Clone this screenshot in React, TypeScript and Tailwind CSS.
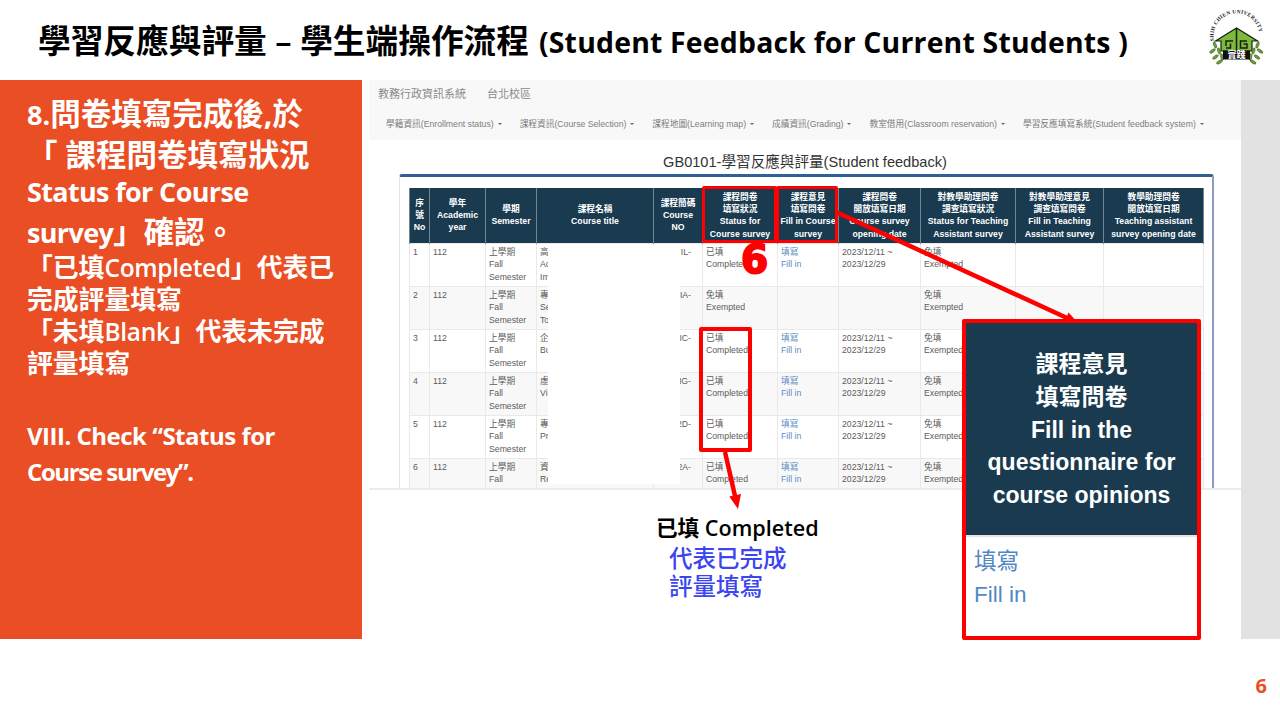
const slideFont = "font-['Open_Sans','Noto_Sans_CJK_TC',sans-serif]";
const shotFont = "font-['Liberation_Sans','Noto_Sans_CJK_TC',sans-serif]";

const navItems = [
  "學籍資訊(Enrollment status)",
  "課程資訊(Course Selection)",
  "課程地圖(Learning map)",
  "成績資訊(Grading)",
  "教室借用(Classroom reservation)",
  "學習反應填寫系統(Student feedback system)",
];

const columns = [20, 56, 51, 117, 49, 75, 61, 82, 95, 88, 100];

const headers = [
  ["序", "號", "No"],
  ["學年", "Academic", "year"],
  ["學期", "Semester"],
  ["課程名稱", "Course title"],
  ["課程簡碼", "Course", "NO"],
  ["課程問卷", "填寫狀況", "Status for", "Course survey"],
  ["課程意見", "填寫問卷", "Fill in Course", "survey"],
  ["課程問卷", "開放填寫日期", "Course survey", "opening date"],
  ["對教學助理問卷", "調查填寫狀況", "Status for Teaching", "Assistant survey"],
  ["對教學助理意見", "調查填寫問卷", "Fill in Teaching", "Assistant survey"],
  ["教學助理問卷", "開放填寫日期", "Teaching assistant", "survey opening date"],
];

const rows = [
  { no: 1, title: ["高", "Ac", "Im"], code: "IL-", done: true },
  { no: 2, title: ["專", "Se", "To"], code: "IA-", done: false },
  { no: 3, title: ["企", "Bu"], code: "IC-", done: true },
  { no: 4, title: ["虛", "Vi"], code: "IG-", done: true },
  { no: 5, title: ["專", "Pr"], code: "2D-", done: true },
  { no: 6, title: ["資", "Re"], code: "2A-", done: true },
];

const Lines = (p: { lines: string[] }) => (
  <>
    {p.lines.map((line) => (
      <div key={line}>{line}</div>
    ))}
  </>
);

const Td = (p: { children?: React.ReactNode; className?: string }) => (
  <td className={`border border-[#e9e9e9] pl-[3px] pt-[2px] align-top ${p.className ?? ""}`}>{p.children}</td>
);

const SurveyTable = () => (
  <table className="table-fixed border-collapse text-[8.7px] leading-[12.6px] text-[#5c5c5c]">
    <colgroup>
      {columns.map((w, i) => (
        <col key={i} style={{ width: w }} />
      ))}
    </colgroup>
    <thead>
      <tr className="h-[55px] bg-[#193a4f] font-bold text-white">
        {headers.map((h, i) => (
          <th key={i} className="border-x border-[#6f8694] text-center align-middle font-bold leading-[12.3px]">
            <Lines lines={h} />
          </th>
        ))}
      </tr>
    </thead>
    <tbody>
      {rows.map((r) => (
        <tr key={r.no} className={`h-[43px] ${r.no % 2 === 0 ? "bg-[#f8f8f8]" : "bg-white"}`}>
          <Td>{r.no}</Td>
          <Td>112</Td>
          <Td>
            <Lines lines={["上學期", "Fall", "Semester"]} />
          </Td>
          <Td>
            <Lines lines={r.title} />
          </Td>
          <Td className="pr-[11px] text-right">{r.code}</Td>
          <Td>
            <Lines lines={r.done ? ["已填", "Completed"] : ["免填", "Exempted"]} />
          </Td>
          <Td className="text-[#5b8ec4]">{r.done && <Lines lines={["填寫", "Fill in"]} />}</Td>
          <Td>{r.done && <Lines lines={["2023/12/11 ~", "2023/12/29"]} />}</Td>
          <Td>
            <Lines lines={["免填", "Exempted"]} />
          </Td>
          <Td />
          <Td />
        </tr>
      ))}
    </tbody>
  </table>
);

const BrowserShot = () => (
  <div className={`relative h-[410px] overflow-hidden border-b-2 border-[#ececec] bg-white ${shotFont}`}>
    <div className="h-[60px] bg-[#f8f8f8] text-[#8a8a8a]">
      <div className="flex h-[24px] items-end gap-[21px] pl-[9px] text-[11px] leading-[20px]">
        <span>教務行政資訊系統</span>
        <span>台北校區</span>
      </div>
      <div className="mt-[13px] flex gap-[18px] pl-[17px] text-[8.7px] leading-[14px] text-[#7d7d7d]">
        {navItems.map((item) => (
          <span key={item} className="flex items-center gap-[4px] whitespace-nowrap">
            {item}
            <span className="h-0 w-0 border-x-[2.5px] border-t-[2.5px] border-x-transparent border-t-[#666]" />
          </span>
        ))}
      </div>
    </div>
    <div className="flex h-[34px] items-center justify-center pt-[10px] text-[14.6px] leading-none text-[#333]">
      GB0101-學習反應與評量(Student feedback)
    </div>
    <div className="ml-[30px] mr-[27px] h-[400px] rounded-t-[3px] border-l border-r-2 border-t-[3px] border-l-[#dbe6f1] border-r-[#8d9bc0] border-t-[#2f6096] pl-[9px] pt-[11px]">
      <SurveyTable />
    </div>
    <div className="absolute left-[179px] top-[164px] h-[240px] w-[132px] bg-white" />
  </div>
);

const leaflets = [
  [9, 35, -20],
  [6.5, 41, 55],
  [13, 41, -15],
  [9.5, 47, 55],
  [16, 47, -10],
  [13.5, 52, 60],
];

const Logo = () => (
  <svg width="60" height="60" viewBox="0 0 60 60" className="shrink-0">
    <defs>
      <path id="logo-arc" d="M8 31 A23 23 0 1 1 53 31" />
    </defs>
    <text className="font-['Liberation_Serif',serif]" fontSize="5.4" fontWeight="700" fill="#222" letterSpacing="0.25">
      <textPath href="#logo-arc">SHIH CHIEN UNIVERSITY</textPath>
    </text>
    <path d="M9.5 31 L30.5 18 L51.5 31 L46 31 L46 41 L15 41 L15 31 Z" fill="#7fb83f" stroke="#14210c" strokeWidth="1.2" strokeLinejoin="miter" />
    <path d="M30.5 18 V41 M20 36 V31 H27 M24.5 33.5 V38 H20 M41 31 H34.5 V38 H41 V34 H37.5" fill="none" stroke="#14210c" strokeWidth="1.5" />
    {leaflets.map(([x, y, r]) => (
      <g key={`${x}-${y}`}>
        <ellipse cx={x} cy={y} rx="1.4" ry="3.3" transform={`rotate(${r} ${x} ${y})`} fill="#6c9f38" stroke="#2a4016" strokeWidth="0.4" />
        <ellipse cx={60.5 - x} cy={y} rx="1.4" ry="3.3" transform={`rotate(${-r} ${60.5 - x} ${y})`} fill="#6c9f38" stroke="#2a4016" strokeWidth="0.4" />
      </g>
    ))}
    <rect x="17" y="40.5" width="27" height="9" fill="#111" />
    <text x="30.5" y="48.3" textAnchor="middle" fontSize="9" fontWeight="700" fill="#fff" className="font-['Noto_Sans_CJK_TC',sans-serif]">
      實踐
    </text>
  </svg>
);

const Callout = () => (
  <div className={`absolute left-[962px] top-[319px] h-[321px] w-[239px] overflow-hidden rounded-[2px] border-4 border-[#ff0000] bg-white ${shotFont}`}>
    <div className="flex h-[214px] flex-col items-center justify-center border-b-2 border-[#e3e3e3] bg-[#193a4f] pt-[2px] text-[23px] font-bold leading-[32.8px] text-white">
      <div>課程意見</div>
      <div>填寫問卷</div>
      <div>Fill in the</div>
      <div>questionnaire for</div>
      <div>course opinions</div>
    </div>
    <div className="pl-[8px] pt-[8px] text-[22.5px] leading-[33px] text-[#5288c2]">
      <div>填寫</div>
      <div>Fill in</div>
    </div>
  </div>
);

const Annotations = () => (
  <>
    <div className="absolute left-[702px] top-[186px] h-[57px] w-[75px] rounded-[2px] border-[3px] border-[#ff0000]" />
    <div className="absolute left-[776px] top-[186px] h-[57px] w-[62px] rounded-[2px] border-[3px] border-[#ff0000]" />
    <div className="absolute left-[699px] top-[327px] h-[125px] w-[53px] rounded-[2px] border-4 border-[#ff0000]" />
    <svg className="pointer-events-none absolute left-0 top-0" width="1280" height="720">
      <line x1="836" y1="212" x2="1067" y2="318" stroke="#ff0000" strokeWidth="4.5" />
      <polygon points="1078,323 1063.6,323.5 1068.6,312.5" fill="#ff0000" />
      <line x1="725" y1="452" x2="735" y2="496" stroke="#ff0000" strokeWidth="4.5" />
      <polygon points="738,509 729.3,496.6 741,494" fill="#ff0000" />
    </svg>
    <span className="absolute left-[741px] top-[237px] font-['DejaVu_Sans',sans-serif] text-[39px] font-bold leading-[46px] text-[#ff0000] [-webkit-text-stroke:2px_#ff0000]">
      6
    </span>
  </>
);

export default function App() {
  return (
    <div className={`relative flex h-[720px] w-[1280px] flex-col overflow-hidden bg-white ${slideFont}`}>
      <header className="flex h-[80px] items-center justify-between pl-[38px] pr-[14px]">
        <h1 className="flex items-baseline gap-[10px] pt-[3px] text-[32.7px] font-semibold leading-none text-black">
          <span>學習反應與評量 – 學生端操作流程</span>
          <span className="text-[28.4px] font-bold tracking-[0.2px]">(Student Feedback for Current Students )</span>
        </h1>
        <Logo />
      </header>

      <main className="flex h-[559px]">
        <aside className="w-[362px] bg-[#e94e24] pl-[27px] pt-[14px] font-semibold text-white">
          <div className="text-[30.5px] font-bold leading-[38.6px]">
            <div>
              <span className="text-[27px]">8.</span>問卷填寫完成後,於
            </div>
            <div>「 課程問卷填寫狀況</div>
            <div className="text-[27px] leading-[38.6px] tracking-[-0.65px]">Status for Course</div>
            <div>
              <span className="text-[27px] tracking-[-0.65px]">survey</span>」確認。
            </div>
          </div>
          <div className="text-[25.8px] leading-[31.8px]">
            <div>
              「已填<span className="text-[24.5px] tracking-[-0.3px]">Completed</span>」代表已
            </div>
            <div>完成評量填寫</div>
            <div>
              「未填<span className="text-[24.5px] tracking-[-0.3px]">Blank</span>」代表未完成
            </div>
            <div>評量填寫</div>
          </div>
          <div className="mt-[38px] text-[24px] font-bold leading-[36.5px] tracking-[-0.5px]">
            <div>VIII. Check “Status for</div>
            <div className="tracking-[-1.4px]">Course survey”.</div>
          </div>
        </aside>

        <section className="ml-[7px] flex w-[872px] flex-col">
          <BrowserShot />
          <div className="pl-[287px] pt-[23px]">
            <div className="text-[21.6px] font-semibold leading-[30px] text-black">已填 Completed</div>
            <div className="pl-[13px] pt-[1px] text-[23.5px] font-medium leading-[28px] text-[#3b45f0]">
              <div>代表已完成</div>
              <div>評量填寫</div>
            </div>
          </div>
        </section>

        <div className="w-[39px] bg-[#e2e2e2]" />
      </main>

      <footer className="flex flex-1 items-center justify-end pr-[13px] pt-[12px] text-[20px] font-bold text-[#e94e24]">
        6
      </footer>

      <Annotations />
      <Callout />
    </div>
  );
}
